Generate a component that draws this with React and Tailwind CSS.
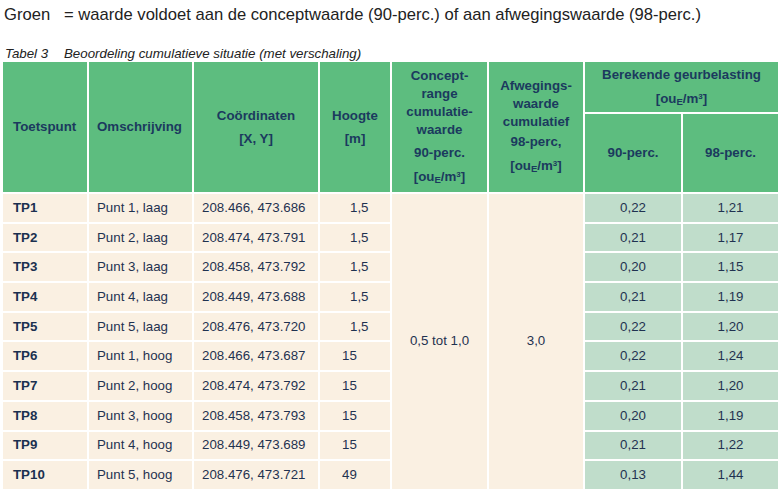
const rows = [
    ['TP1', 'Punt 1, laag', '208.466, 473.686', '1,5', '0,22', '1,21'],
    ['TP2', 'Punt 2, laag', '208.474, 473.791', '1,5', '0,21', '1,17'],
    ['TP3', 'Punt 3, laag', '208.458, 473.792', '1,5', '0,20', '1,15'],
    ['TP4', 'Punt 4, laag', '208.449, 473.688', '1,5', '0,21', '1,19'],
    ['TP5', 'Punt 5, laag', '208.476, 473.720', '1,5', '0,22', '1,20'],
    ['TP6', 'Punt 1, hoog', '208.466, 473.687', '15', '0,22', '1,24'],
    ['TP7', 'Punt 2, hoog', '208.474, 473.792', '15', '0,21', '1,20'],
    ['TP8', 'Punt 3, hoog', '208.458, 473.793', '15', '0,20', '1,19'],
    ['TP9', 'Punt 4, hoog', '208.449, 473.689', '15', '0,21', '1,22'],
    ['TP10', 'Punt 5, hoog', '208.476, 473.721', '49', '0,13', '1,44'],
]

const Unit = () => (
    <span>[ou<span className='relative top-[2px] text-[9.5px]'>E</span>/m<span className='relative top-[-4px] text-[8px]'>3</span>]</span>
)

const App = () => {
    return (
        <div className="w-[784px] h-[497px] bg-white font-['Liberation_Sans',Arial,sans-serif] overflow-hidden">
            <div className='pt-[6px] pl-[4px] text-[16.6px] leading-[18px] text-[#222]'>
                <span className='inline-block w-[60px]'>Groen</span>
                = waarde voldoet aan de conceptwaarde (90-perc.) of aan afwegingswaarde (98-perc.)
            </div>
            <div className='mt-[22px] pl-[5px] text-[13.3px] leading-[15px] italic text-[#222]'>
                <span className='inline-block w-[59px]'>Tabel 3</span>
                Beoordeling cumulatieve situatie (met verschaling)
            </div>

            <div className='mt-[1px] ml-[3px] grid gap-[2px] w-fit
                grid-cols-[84px_103px_124px_70px_95px_94px_96px_95px]
                grid-rows-[50px_78px_repeat(10,27.7px)] text-[13.3px]'>

                {/* header */}
                <div className='row-span-2 bg-[#5dbd7f] flex items-center pl-[10px] font-bold text-[#1b3a5e]'>Toetspunt</div>
                <div className='row-span-2 bg-[#5dbd7f] flex items-center pl-[8px] font-bold text-[#1b3a5e]'>Omschrijving</div>
                <div className='row-span-2 bg-[#5dbd7f] flex flex-col justify-center items-center font-bold text-[#1b3a5e] leading-[18px]'>
                    <div>Coördinaten</div>
                    <div className='mt-[5px]'>[X, Y]</div>
                </div>
                <div className='row-span-2 bg-[#5dbd7f] flex flex-col justify-center items-center font-bold text-[#1b3a5e] leading-[18px]'>
                    <div>Hoogte</div>
                    <div className='mt-[5px]'>[m]</div>
                </div>
                <div className='row-span-2 bg-[#5dbd7f] flex flex-col justify-center items-center text-center font-bold text-[#1b3a5e] leading-[18px]'>
                    <div>Concept-</div>
                    <div>range</div>
                    <div>cumulatie-</div>
                    <div>waarde</div>
                    <div className='mt-[5px]'>90-perc.</div>
                    <div className='mt-[6px]'><Unit /></div>
                </div>
                <div className='row-span-2 bg-[#5dbd7f] flex flex-col justify-center items-center text-center font-bold text-[#1b3a5e] leading-[18px]'>
                    <div>Afwegings-</div>
                    <div>waarde</div>
                    <div>cumulatief</div>
                    <div className='mt-[2px]'>98-perc,</div>
                    <div className='mt-[6px]'><Unit /></div>
                </div>
                <div className='col-span-2 bg-[#5dbd7f] flex flex-col justify-center items-center font-bold text-[#1b3a5e] leading-[18px] pt-[1px]'>
                    <div>Berekende geurbelasting</div>
                    <div className='mt-[6px]'><Unit /></div>
                </div>
                <div className='bg-[#5dbd7f] flex items-center justify-center font-bold text-[#1b3a5e]'>90-perc.</div>
                <div className='bg-[#5dbd7f] flex items-center justify-center font-bold text-[#1b3a5e]'>98-perc.</div>

                {/* body */}
                {rows.map((r, i) => (
                    <div key={r[0]} className='contents'>
                        <div className='bg-[#faf0e2] flex items-center pl-[10px] font-bold text-[#1b3050]'>{r[0]}</div>
                        <div className='bg-[#faf0e2] flex items-center pl-[8px] text-[#1f3250]'>{r[1]}</div>
                        <div className='bg-[#faf0e2] flex items-center pl-[8px] text-[#1f3250]'>{r[2]}</div>
                        <div className={`bg-[#faf0e2] flex items-center text-[#1f3250] ${r[3] === '1,5' ? 'pl-[30px]' : 'pl-[22px]'}`}>{r[3]}</div>
                        {i === 0 && (
                            <>
                                <div className='row-span-10 bg-[#faf0e2] flex items-center justify-center text-[#1f3250]'>0,5 tot 1,0</div>
                                <div className='row-span-10 bg-[#faf0e2] flex items-center justify-center text-[#1f3250]'>3,0</div>
                            </>
                        )}
                        <div className='bg-[#c0ddcb] flex items-center justify-center text-[#1f3250]'>{r[4]}</div>
                        <div className='bg-[#c0ddcb] flex items-center justify-center text-[#1f3250]'>{r[5]}</div>
                    </div>
                ))}
            </div>
        </div>
    )
}

export default App
